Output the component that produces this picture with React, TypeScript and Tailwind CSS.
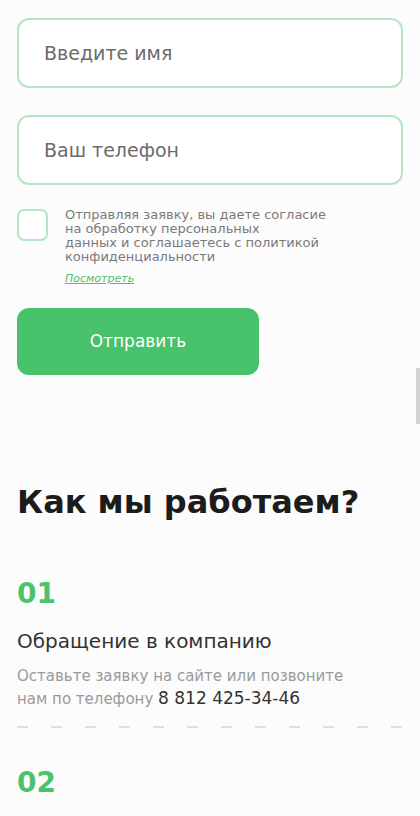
import React from "react";

const font = { fontFamily: '"DejaVu Sans", "Noto Sans", sans-serif' };

function Field({ placeholder }: { placeholder: string }) {
  return (
    <input
      type="text"
      placeholder={placeholder}
      className="h-[70px] w-full rounded-[12px] border-2 border-[#b5e6c4] bg-white px-[25px] text-[19px] text-[#333] placeholder:text-[#6b6b6b] outline-none"
    />
  );
}

export default function App() {
  return (
    <div className="relative min-h-[816px] w-[420px] overflow-hidden bg-[#fcfcfd]" style={font}>
      <div className="px-[17px] pt-[18px]">
        <form className="flex flex-col">
          <div className="flex flex-col gap-[27px]">
            <Field placeholder="Введите имя" />
            <Field placeholder="Ваш телефон" />
          </div>

          <div className="mt-[23px] flex items-start gap-[17px]">
            <span className="mt-[1px] h-[32px] w-[31px] shrink-0 rounded-[7px] border-2 border-[#b5e6c4] bg-white" />
            <div className="text-[13px] leading-[14px] text-[#7a7a7a]">
              <p>
                Отправляя заявку, вы даете согласие
                <br />
                на обработку персональных
                <br />
                данных и соглашаетесь с политикой
                <br />
                конфиденциальности
              </p>
              <a href="#" className="mt-[8px] inline-block text-[11px] italic text-[#4cc16e] underline">
                Посмотреть
              </a>
            </div>
          </div>

          <button
            type="button"
            className="mt-[22px] h-[67px] w-[242px] rounded-[12px] bg-[#47c26a] text-[17px] text-white"
          >
            Отправить
          </button>
        </form>

        <h2 className="mt-[109px] text-[32px] font-bold leading-[36px] text-[#1c1c1c]">Как мы работаем?</h2>

        <div className="mt-[57px]">
          <div className="text-[28px] font-bold leading-[34px] text-[#4cc26e]">01</div>
          <div className="mt-[17px] text-[20px] leading-[26px] text-[#333]">Обращение в компанию</div>
          <p className="mt-[11px] text-[15px] leading-[22px] text-[#9a9a9a]">
            Оставьте заявку на сайте или позвоните
            <br />
            нам по телефону <span className="text-[17px] text-[#333]">8 812 425-34-46</span>
          </p>
          <div className="mt-[16px] h-[2px] bg-[repeating-linear-gradient(90deg,#dedede_0_11px,transparent_11px_34px)]" />
        </div>

        <div className="mt-[38px]">
          <div className="text-[28px] font-bold leading-[34px] text-[#4cc26e]">02</div>
        </div>
      </div>

      <div className="absolute right-0 top-[368px] h-[56px] w-[4px] bg-[#d4d4d4]" />
    </div>
  );
}
